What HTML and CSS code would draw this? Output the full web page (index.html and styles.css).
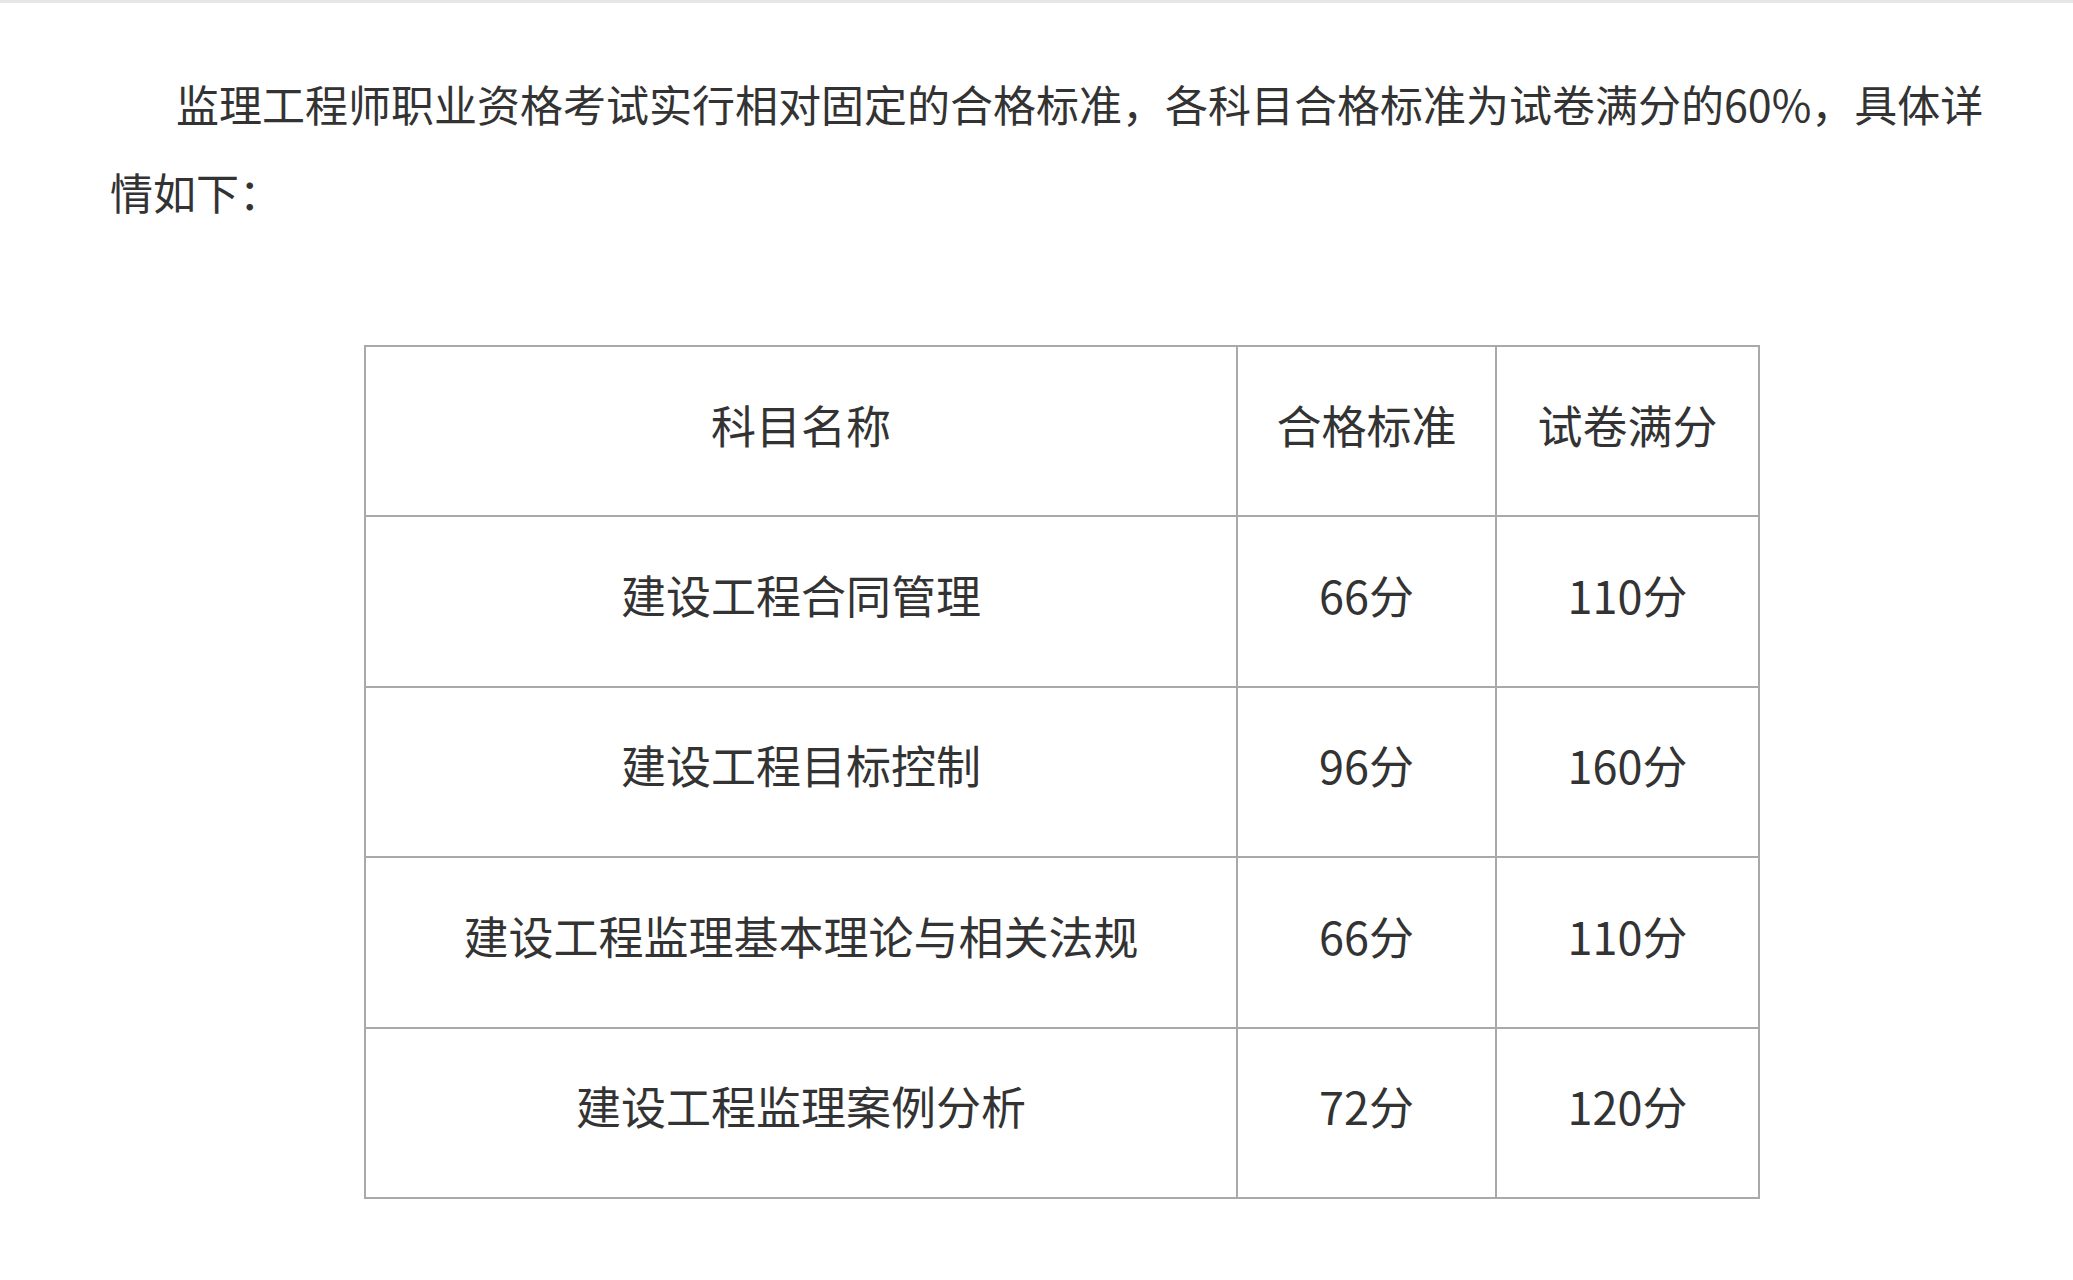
FILE: index.html
```html
<!DOCTYPE html>
<html lang="zh-CN">
<head>
<meta charset="utf-8">
<title>监理工程师合格标准</title>
<link rel="stylesheet" href="styles.css">
</head>
<body>
<div class="page">
  <p class="intro">监理工程师职业资格考试实行相对固定的合格标准，各科目合格标准为试卷满分的60%，具体详情如下：</p>
  <div class="table-wrap">
    <table class="scores">
      <colgroup>
        <col class="c-name">
        <col class="c-pass">
        <col class="c-full">
      </colgroup>
      <tr><td>科目名称</td><td>合格标准</td><td>试卷满分</td></tr>
      <tr><td>建设工程合同管理</td><td>66分</td><td>110分</td></tr>
      <tr><td>建设工程目标控制</td><td>96分</td><td>160分</td></tr>
      <tr><td>建设工程监理基本理论与相关法规</td><td>66分</td><td>110分</td></tr>
      <tr><td>建设工程监理案例分析</td><td>72分</td><td>120分</td></tr>
    </table>
  </div>
</div>
</body>
</html>
```

FILE: styles.css
```css
html, body {
  margin: 0;
  padding: 0;
  background: #ffffff;
}

body {
  font-family: "Noto Sans CJK SC", "Noto Sans", sans-serif;
  color: #333333;
  border-top: 3px solid #e6e6e6;
}

.page {
  width: 2073px;
  box-sizing: border-box;
  padding: 56px 0 0 110px;
}

.intro {
  margin: 0;
  width: 1890px;
  font-size: 43px;
  line-height: 88px;
  text-indent: 66px;
}

.table-wrap {
  padding: 110px 0 0 254px;
}

.scores {
  border-collapse: collapse;
  width: 1394px;
  table-layout: fixed;
}

.c-name { width: 872px; }
.c-pass { width: 259px; }
.c-full { width: 263px; }

.scores tr {
  height: 170.4px;
}

.scores td {
  border: 2px solid #a9a9a9;
  padding: 0 0 13px 0;
  text-align: center;
  vertical-align: middle;
  font-size: 45px;
  line-height: 1.2;
  color: #333333;
}
```
